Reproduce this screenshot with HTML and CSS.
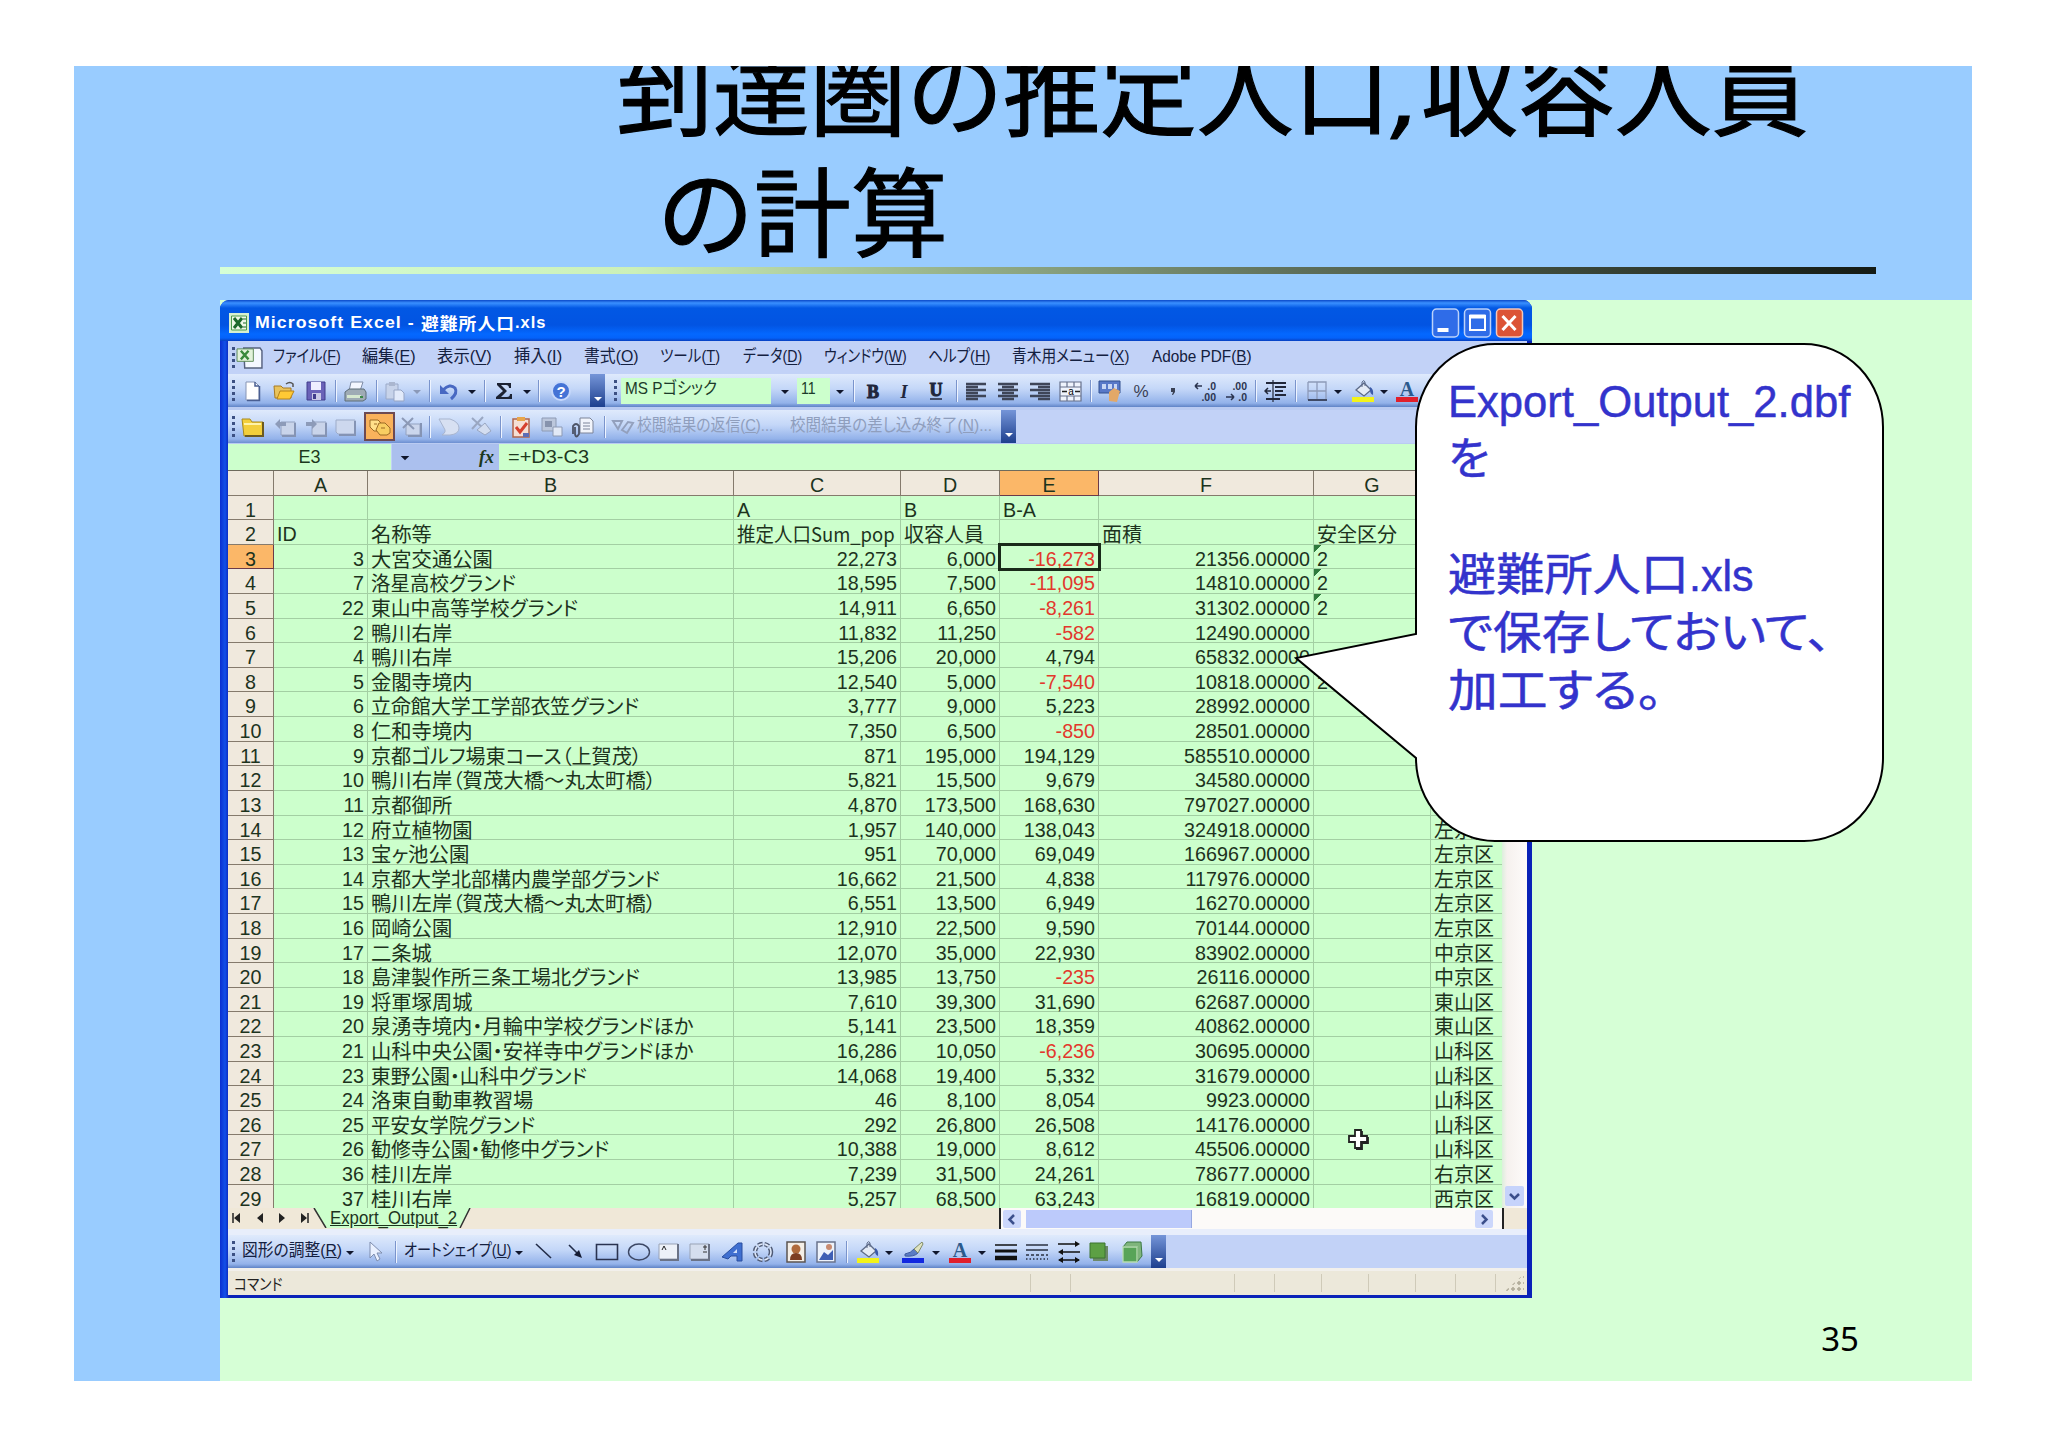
FILE: index.html
```html
<!DOCTYPE html>
<html lang="ja">
<head>
  <meta charset="UTF-8">
  <title>到達圏の推定人口,収容人員の計算</title>
  <link rel="stylesheet" href="styles.css">
</head>
<body>

<!-- toolbar icons -->
<svg class="symbols">
  <symbol id="new" viewBox="0 0 24 24"><path d="M6 3h9l4 4v14H6z" fill="#fff" stroke="#8795b5"/><path d="M15 3v4h4M19.500 7v14.500H7" fill="none" stroke="#4a5f92" stroke-width="1.500"/></symbol>
  <symbol id="open" viewBox="0 0 24 24"><path d="M2 7h7l2 2h8v10H3z" fill="#e9c35c" stroke="#a87a22"/><path d="M5 20l3-8h14l-4 8z" fill="#ffc935" stroke="#b5821d"/><path d="M14 5q4-3 7 0v3" fill="none" stroke="#555" stroke-width="1.500"/></symbol>
  <symbol id="save" viewBox="0 0 24 24"><path d="M3 3h18v18H3z" fill="#6a62b8" stroke="#413c8c"/><path d="M7 3h10v8H7z" fill="#eef"/><path d="M8 14h9v7H8z" fill="#c9c9e6"/><path d="M9 15h3v5H9z" fill="#413c8c"/></symbol>
  <symbol id="print" viewBox="0 0 24 24"><path d="M8 3h12l-3 9H6z" fill="#f4f7ff" stroke="#7d8ba5"/><path d="M2 13l4-3h15l2 3v7l-3 2H2z" fill="#9fabb5" stroke="#5c6c76"/><path d="M4 16h14v3H4z" fill="#d6e8d0"/><path d="M17 17h3v2h-3z" fill="#3c8a4a"/></symbol>
  <symbol id="paste" viewBox="0 0 24 24"><path d="M3 5h12v15H3z" fill="#c7d3ea" stroke="#9aa9c8"/><path d="M6 3h6v4H6z" fill="#aab6cf"/><path d="M11 11h7l3 3v8H11z" fill="#e2eafa" stroke="#97a5c4"/></symbol>
  <symbol id="undo" viewBox="0 0 24 24"><path d="M6 11q7-7 12-2q3 5-4 11" fill="none" stroke="#4868c2" stroke-width="3"/><path d="M3 6v9h9z" fill="#4868c2"/></symbol>
  <symbol id="sum" viewBox="0 0 24 24"><path d="M5 4h14v5h-2q0-3-3-3H9l6 6-6 6h6q3 0 3-3h2v5H4v-2l7-6-6-6z" fill="#1c2233"/></symbol>
  <symbol id="help" viewBox="0 0 24 24"><circle cx="12" cy="12" r="9" fill="#4473d6" stroke="#c6d8fb" stroke-width="2"/><text x="12" y="18" text-anchor="middle" class="help-mark">?</text></symbol>
  <symbol id="arr" viewBox="0 0 24 24"><path d="M8 11h8l-4 4z" fill="#10162c"/></symbol>
  <symbol id="arrg" viewBox="0 0 24 24"><path d="M8 11h8l-4 4z" fill="#8b99b8"/></symbol>
  <symbol id="bold" viewBox="0 0 24 24"><text x="12" y="18.500" text-anchor="middle" class="fmt-b">B</text></symbol>
  <symbol id="italic" viewBox="0 0 24 24"><text x="12" y="18.500" text-anchor="middle" class="fmt-i">I</text></symbol>
  <symbol id="under" viewBox="0 0 24 24"><text x="12" y="17" text-anchor="middle" class="fmt-b">U</text><path d="M6 20h12" stroke="#20263c" stroke-width="1.500"/></symbol>
  <symbol id="left" viewBox="0 0 24 24"><path d="M2 5h20M2 8h12M2 11h20M2 14h12M2 17h20M2 20h12" stroke="#3e4558" stroke-width="2.400"/></symbol>
  <symbol id="center" viewBox="0 0 24 24"><path d="M2 5h20M6 8h12M2 11h20M6 14h12M2 17h20M6 20h12" stroke="#3e4558" stroke-width="2.400"/></symbol>
  <symbol id="right" viewBox="0 0 24 24"><path d="M2 5h20M10 8h12M2 11h20M10 14h12M2 17h20M10 20h12" stroke="#3e4558" stroke-width="2.400"/></symbol>
  <symbol id="merge" viewBox="0 0 24 24"><path d="M1 3h21v19H1zM1 8h21M1 17h21M8 3v5M15 3v5M8 17v5M15 17v5" fill="#eef3fc" stroke="#66708a" stroke-width="1.200"/><path d="M3 12.500h5M21 12.500h-5" stroke="#222" stroke-width="1.500"/><text x="12" y="16" text-anchor="middle" class="tiny">a</text></symbol>
  <symbol id="money" viewBox="0 0 24 24"><path d="M1 2h21v12H1z" fill="#5878c8" stroke="#33508f"/><path d="M4 5h4v5H4zM10 5h4v5h-4zM16 5h3v5h-3z" fill="#c8d6f4"/><path d="M11 13l5-4 6 3-3 11-8-1z" fill="#e3a868"/></symbol>
  <symbol id="percent" viewBox="0 0 24 24"><text x="12" y="18" text-anchor="middle" class="sym">%</text></symbol>
  <symbol id="comma" viewBox="0 0 24 24"><path d="M10 9h4v4l-2 3h-1l1-3h-2z" fill="#3a4154"/></symbol>
  <symbol id="inc" viewBox="0 0 24 24"><path d="M2 7h7M2 7l3-3M2 7l3 3" stroke="#2b3550" fill="none" stroke-width="1.500"/><text x="23" y="11" text-anchor="end" class="dec">.0</text><text x="23" y="22" text-anchor="end" class="dec">.00</text></symbol>
  <symbol id="dec" viewBox="0 0 24 24"><path d="M1 18h8M9 18l-3-3M9 18l-3 3" stroke="#2b3550" fill="none" stroke-width="1.500"/><text x="22" y="11" text-anchor="end" class="dec">.00</text><text x="22" y="22" text-anchor="end" class="dec">.0</text></symbol>
  <symbol id="indent" viewBox="0 0 24 24"><path d="M2 4h20M11 8h11M11 12h8M11 16h11M2 20h14" stroke="#22283a" stroke-width="2.200"/><path d="M9 1v22" stroke="#22283a" stroke-width="1.200"/><path d="M1 12h6M4 9l-3 3 3 3" fill="none" stroke="#22283a" stroke-width="1.500"/></symbol>
  <symbol id="border" viewBox="0 0 24 24"><path d="M3 3h18v18M3 3v18M12 3v18M3 12h18" fill="none" stroke="#8d9ab8" stroke-width="1.300"/><path d="M3 21h19" stroke="#3f4a66" stroke-width="2"/></symbol>
  <symbol id="fill" viewBox="0 0 24 24"><path d="M5 11l8-7 7 7-7 6z" fill="#e4ebf6" stroke="#5d6b88" stroke-width="1.300"/><path d="M11 8V3q2-3 3 0v4" fill="none" stroke="#5d6b88"/><path d="M19 8q4 2 3 8q-3-1-3-5z" fill="#3b5aa8"/><path d="M1 18h22v5H1z" fill="#f3f31a"/></symbol>
  <symbol id="pen" viewBox="0 0 24 24"><path d="M4 14q6-1 9-5l4 4q-4 4-13 3z" fill="#5b7cc4" stroke="#3f5c9e"/><path d="M13 9l8-7 1 2-5 9z" fill="#dfe3c0" stroke="#7f8a66"/><path d="M1 18h22v5H1z" fill="#1228e0"/></symbol>
  <symbol id="fontc" viewBox="0 0 24 24"><text x="12" y="16.500" text-anchor="middle" class="font-a">A</text><path d="M1 18h22v5H1z" fill="#e01f2b"/></symbol>
  <symbol id="folder" viewBox="0 0 24 24"><path d="M1 4h8l2 3h11v14H3z" fill="#f3cf3c" stroke="#a8891c"/><path d="M22 7v14H4" fill="none" stroke="#6c5a20" stroke-width="2"/><path d="M3 9h17" stroke="#fff3a8" stroke-width="2"/></symbol>
  <symbol id="gback" viewBox="0 0 24 24"><path d="M8 7h14v13H8z" fill="#c9d4ea" stroke="#94a2c0"/><path d="M22 8v13H9" fill="none" stroke="#8594b4" stroke-width="2"/><path d="M2 9l5-5v3h6v4H7v3z" fill="#8d9bb9"/></symbol>
  <symbol id="gfwd" viewBox="0 0 24 24"><path d="M8 7h14v13H8z" fill="#c9d4ea" stroke="#94a2c0"/><path d="M22 8v13H9" fill="none" stroke="#8594b4" stroke-width="2"/><path d="M13 9L8 4v3H2v4h6v3z" fill="#8d9bb9"/></symbol>
  <symbol id="gnote" viewBox="0 0 24 24"><path d="M2 5h19v14H4l-2-2z" fill="#cdd8ee" stroke="#9dabc8"/><path d="M21 6v14H5" fill="none" stroke="#8594b4" stroke-width="2"/></symbol>
  <symbol id="notes" viewBox="0 0 24 24"><path d="M2 5h8l4 4v7H6l-4-4z" fill="#ffe08a" stroke="#9c6a25"/><path d="M11 8h6l5 5v5l-3 2h-7l-4-5z" fill="#f8cd62" stroke="#9c6a25"/><path d="M6 9h3M13 13h4" stroke="#9c6a25"/></symbol>
  <symbol id="gdel" viewBox="0 0 24 24"><path d="M7 9h14v11H7z" fill="#cbd6ec" stroke="#94a2c0"/><path d="M22 8v13H9" fill="none" stroke="#8594b4" stroke-width="2"/><path d="M3 3l12 11M14 3L4 13" stroke="#8c99b6" stroke-width="2"/></symbol>
  <symbol id="gpage" viewBox="0 0 24 24"><path d="M2 4h11q9 3 9 9t-9 7H5q5-3 2-7z" fill="#d7e0f2" stroke="#a8b5cf"/></symbol>
  <symbol id="gdel2" viewBox="0 0 24 24"><path d="M3 3l13 12M14 2L3 14" stroke="#9aa7c2" stroke-width="2"/><path d="M8 15l8-7 6 8-6 4z" fill="#d3ddf0" stroke="#9aa7c2"/></symbol>
  <symbol id="task" viewBox="0 0 24 24"><path d="M4 4h16v18H4z" fill="#f5dfd5" stroke="#b0664c" stroke-width="1.500"/><path d="M8 2h8v4H8z" fill="#e8a64c"/><path d="M7 12l4 5 7-9" fill="none" stroke="#d6402e" stroke-width="3"/><path d="M14 18h6v4h-6z" fill="#5d6db5"/></symbol>
  <symbol id="gimg" viewBox="0 0 24 24"><path d="M1 3h14v13H1z" fill="#bcc7dc" stroke="#8d9ab4"/><path d="M4 6h7v6H4z" fill="#8793ad"/><path d="M12 12h9v9h-9z" fill="#e2e9f6" stroke="#8d9ab4"/></symbol>
  <symbol id="clip" viewBox="0 0 24 24"><path d="M9 3h10l3 3v12H9z" fill="#f1f4fb" stroke="#7c8498"/><path d="M12 8h7M12 11h7M12 14h7" stroke="#7c8498"/><path d="M2 19V11q3-4 6 0v8q-3 5-4 0v-7" fill="none" stroke="#4c5366" stroke-width="1.800"/></symbol>
  <symbol id="greply" viewBox="0 0 24 24"><path d="M2 6l9 0-4 8zM11 15l6-8 5 1-6 10z" fill="none" stroke="#93a0bd" stroke-width="2"/></symbol>
  <symbol id="pointer" viewBox="0 0 24 24"><path d="M7 2v16l4-4 3 7 3-2-3-6h5z" fill="#eaf1ff" stroke="#7e8dae"/></symbol>
  <symbol id="line" viewBox="0 0 24 24"><path d="M4 4l15 14" stroke="#222c48" stroke-width="1.600"/></symbol>
  <symbol id="arrow" viewBox="0 0 24 24"><path d="M6 5l9 9" stroke="#222c48" stroke-width="1.600"/><path d="M19 18l-8-3 5-5z" fill="#141b34"/></symbol>
  <symbol id="rect" viewBox="0 0 24 24"><path d="M1.500 4.500h21v15h-21z" fill="none" stroke="#2a3350" stroke-width="1.600"/></symbol>
  <symbol id="oval" viewBox="0 0 24 24"><ellipse cx="12" cy="12" rx="10.500" ry="8" fill="none" stroke="#3c4764" stroke-width="1.400"/></symbol>
  <symbol id="tbox" viewBox="0 0 24 24"><path d="M2 4h19v15H2z" fill="#edf1f8" stroke="#9aa3b5"/><path d="M21 4v16H3" fill="none" stroke="#6b7386" stroke-width="2"/><path d="M5 10l2-4 2 4" fill="none" stroke="#222"/></symbol>
  <symbol id="vbox" viewBox="0 0 24 24"><path d="M2 4h19v15H2z" fill="#d5deee" stroke="#9aa3b5"/><path d="M21 4v16H3" fill="none" stroke="#6b7386" stroke-width="2"/><path d="M15 7h4M17 5v5M15 12h4" stroke="#333"/></symbol>
  <symbol id="wordart" viewBox="0 0 24 24"><path d="M1 17L17 3h4v18h-5v-5h-6l-3 3z" fill="#3f6fd0" stroke="#2a4f9f"/><path d="M12 13h4V9z" fill="#cfe0fb"/></symbol>
  <symbol id="cycle" viewBox="0 0 24 24"><circle cx="12" cy="12" r="8" fill="none" stroke="#4f5b76" stroke-width="4.500" stroke-dasharray="4.500 2"/><circle cx="12" cy="12" r="8" fill="none" stroke="#dfe8f8" stroke-width="1.600" stroke-dasharray="4.500 2"/></symbol>
  <symbol id="clipart" viewBox="0 0 24 24"><path d="M3 2h18v20H3z" fill="#f4eee6" stroke="#5b5450" stroke-width="1.500"/><circle cx="12" cy="9" r="4.500" fill="#b06a3c"/><path d="M6 20q0-7 6-7t6 7z" fill="#7c3c22"/></symbol>
  <symbol id="picture" viewBox="0 0 24 24"><path d="M3 2h18v20H3z" fill="#eef3fb" stroke="#6a738c" stroke-width="1.500"/><path d="M5 20l5-8 4 3 5-5v10z" fill="#3f5fb4"/><circle cx="15" cy="7" r="3" fill="#c98b70"/></symbol>
  <symbol id="weight" viewBox="0 0 24 24"><path d="M1 5h22" stroke="#111" stroke-width="1.500"/><path d="M1 11h22" stroke="#111" stroke-width="3"/><path d="M1 18h22" stroke="#111" stroke-width="4.500"/></symbol>
  <symbol id="dash" viewBox="0 0 24 24"><path d="M1 5h22M1 10h22" stroke="#2a3040" stroke-width="1.500"/><path d="M1 15h22" stroke="#2a3040" stroke-width="1.500" stroke-dasharray="3 2"/><path d="M1 19h22" stroke="#2a3040" stroke-width="1.500" stroke-dasharray="1.500 2"/></symbol>
  <symbol id="arrows" viewBox="0 0 24 24"><path d="M1 4h20M3 12h20M2 20h20" stroke="#111" stroke-width="1.500"/><path d="M18 1l5 3-5 3zM6 9l-5 3 5 3zM6 17l-5 3 5 3zM18 17l5 3-5 3z" fill="#111"/></symbol>
  <symbol id="shadow" viewBox="0 0 24 24"><path d="M6 6h15v15H6z" fill="#6d8a6a"/><path d="M3 3h15v15H3z" fill="#5da044" stroke="#3d7530"/></symbol>
  <symbol id="threed" viewBox="0 0 24 24"><path d="M7 2h14l1 14-5 6V7H3z" fill="#7fb57c" stroke="#3d7a45"/><path d="M3 7h14v15H3z" fill="#58a458" stroke="#b7dcb0" stroke-width="1.300"/></symbol>
</svg>

<div class="slide">
  <header class="slide-head">
    <h1><span class="line1">到達圏の推定人口<span class="c">,</span>収容人員</span><span class="line2">の計算</span></h1>
    <div class="rule"></div>
  </header>

  <div class="slide-body">
    <div class="window">
      <div class="titlebar">
        <svg class="xl" viewBox="0 0 20 20"><path d="M0 0h20v20H0z" fill="#d6f0cf"/><path d="M2.500 3h15v14h-15z" fill="#eef8e8" stroke="#4d9a4c"/><path d="M5 5l8 10M13 5L5 15" stroke="#1d6a2c" stroke-width="3"/><path d="M14 6h3M14 10h3M14 14h3" stroke="#1d6a2c"/></svg>
        <span data-w="166">Microsoft Excel - </span><span data-w="94">避難所人口</span><span data-w="31">.xls</span>
        <div class="win-btns">
          <svg viewBox="0 0 28 30"><rect x="1" y="1" width="26" height="28" rx="4" fill="#2f6ce8" stroke="#bcd2fa" stroke-width="1.500"/><path d="M6 20h11v4H6z" fill="#fff"/></svg>
          <svg viewBox="0 0 28 30"><rect x="1" y="1" width="26" height="28" rx="4" fill="#2f6ce8" stroke="#bcd2fa" stroke-width="1.500"/><path d="M6.500 8h15v14h-15z" fill="none" stroke="#fff" stroke-width="2"/><path d="M6 8.500h16" stroke="#fff" stroke-width="4"/></svg>
          <svg viewBox="0 0 28 30"><rect x="1" y="1" width="26" height="28" rx="4" fill="#dc5436" stroke="#f3c7bb" stroke-width="1.500"/><path d="M7 8l13 14M20 8L7 22" stroke="#fff" stroke-width="3"/></svg>
        </div>
      </div>

      <div class="menubar">
        <i class="grip"></i>
        <svg class="doc" viewBox="0 0 28 24"><path d="M8 2h17l2 3v18H9z" fill="#f4f8ff" stroke="#56617e" stroke-width="1.500"/><path d="M1 3h17v13H1z" fill="#e2f2da" stroke="#5c8a58"/><path d="M5 5l8 9M13 5l-8 9" stroke="#3a8a3c" stroke-width="2.500"/></svg>
        <div class="menus" id="menus"></div>
      </div>

      <div class="bar" id="standard"></div>
      <div class="bar review" id="review"></div>

      <div class="formula">
        <div class="name-box">E3</div>
        <div class="fx-area"><svg viewBox="0 0 24 24"><use href="#arr"/></svg><em>fx</em></div>
        <div class="fx-text"><span data-w="81">=+D3-C3</span></div>
      </div>

      <div class="sheet-area">
        <div class="sheet" id="sheet"></div>
        <div class="vscroll"><svg viewBox="0 0 19 20"><rect width="19" height="20" rx="2" fill="#c6d3fb"/><path d="M5 8l4.500 4.500L14 8" fill="none" stroke="#3c4f8c" stroke-width="2.500"/></svg></div>
      </div>

      <div class="tabs">
        <svg class="tab-nav" viewBox="0 0 84 20"><path d="M5 5v10M80 5v10" stroke="#222" stroke-width="1.500"/><path d="M12 5v10l-6-5zM35 5v10l-6-5zM51 5v10l6-5zM73 5v10l6-5z" fill="#222"/></svg>
        <div class="tab"><svg viewBox="0 0 160 20"><path d="M2 0l12 20h134l10-20z" fill="#ccffcc"/><path d="M2 0l12 20M148 20l10-20" fill="none" stroke="#333" stroke-width="1.500"/></svg><span data-w="127">Export_Output_2</span></div>
        <div class="hscroll">
          <svg viewBox="0 0 18 18"><rect width="18" height="18" rx="2" fill="#ccd7fb"/><path d="M11 5L6.500 9.500 11 14" fill="none" stroke="#3c4f8c" stroke-width="2.500"/></svg>
          <div class="thumb"></div>
          <svg class="sr" viewBox="0 0 18 18"><rect width="18" height="18" rx="2" fill="#ccd7fb"/><path d="M7 5l4.500 4.500L7 14" fill="none" stroke="#3c4f8c" stroke-width="2.500"/></svg>
        </div>
        <div class="corner"></div>
      </div>

      <div class="bar draw" id="draw"></div>
      <div class="status"><span data-w="48">コマンド</span><div class="panes"><i></i><i></i><i></i><i></i><i></i><i></i><i></i><i></i><i></i><b></b></div></div>
    </div>
  </div>

  <svg class="mouse" viewBox="0 0 22 22"><path d="M8 2h6v6h6v6h-6v6H8v-6H2V8h6z" fill="#fff" stroke="#222" stroke-width="1.800"/><path d="M15 3v5M21 9v6h-6v6H9" fill="none" stroke="#222" stroke-width="1.800"/></svg>

  <div class="callout">
    <svg viewBox="0 0 592 500"><path d="M201 2H510A79 83 0 0 1 589 85V416A79 83 0 0 1 510 499H201A79 83 0 0 1 122 416L2 316L122 292V85A79 83 0 0 1 201 2Z" fill="#fff" stroke="#000" stroke-width="2"/></svg>
    <div class="callout-text">
      <p><span data-w="402">Export_Output_2.dbf</span></p>
      <p>を</p>
      <p>&nbsp;</p>
      <p><span data-w="241">避難所人口</span><span data-w="65">.xls</span></p>
      <p><span data-w="383">で保存しておいて、</span></p>
      <p><span data-w="215">加工する。</span></p>
    </div>
  </div>
  <div class="page-no">35</div>
</div>

<script>
// menu captions: text, accelerator, left edge, width (window coordinates)
const menus = [
  ["ファイル", "F", 45, 68], ["編集", "E", 134, 54], ["表示", "V", 210, 55], ["挿入", "I", 287, 48],
  ["書式", "O", 357, 55], ["ツール", "T", 433, 60], ["データ", "D", 516, 59], ["ウィンドウ", "W", 597, 83],
  ["ヘルプ", "H", 701, 62], ["青木用メニュー", "X", 785, 117], ["Adobe PDF", "B", 925, 100]
];

// toolbar items: [name, centre x] or [kind, left, width, html]
const standard = [
  ["grip", 5], ["new", 24], ["open", 56], ["save", 88], ["sep", 108], ["print", 127], ["sep", 149], ["paste", 167],
  ["arrg", 189], ["sep", 202], ["undo", 221], ["arr", 244], ["sep", 257], ["sum", 276], ["arr", 299], ["sep", 311],
  ["help", 333], ["cap", 369], ["grip", 387], ["combo", 393, 150, '<span data-w="92">MS Pゴシック</span>'], ["arr", 557],
  ["combo", 569, 33, '<span data-w="15">11</span>'], ["arr", 612], ["sep", 626], ["bold", 645], ["italic", 676],
  ["under", 708], ["sep", 729], ["left", 748], ["center", 780], ["right", 812], ["merge", 843], ["sep", 863],
  ["money", 882], ["percent", 913], ["comma", 945], ["inc", 977], ["dec", 1009], ["sep", 1028], ["indent", 1048],
  ["sep", 1068], ["border", 1089], ["arr", 1110], ["fill", 1135], ["arr", 1156], ["fontc", 1179]
];
const review = [
  ["grip", 5], ["folder", 25], ["gback", 57], ["gfwd", 88], ["gnote", 118], ["hot", 151], ["gdel", 183], ["sep", 202],
  ["gpage", 221], ["gdel2", 253], ["sep", 273], ["task", 293], ["gimg", 325], ["clip", 355], ["sep", 377],
  ["greply", 395], ["label", 409, 136, '<span class="dim" data-w="136">校閲結果の返信(<u>C</u>)...</span>'],
  ["label", 562, 202, '<span class="dim" data-w="202">校閲結果の差し込み終了(<u>N</u>)...</span>'], ["cap", 780]
];
const draw = [
  ["grip", 5], ["label", 14, 100, '<span data-w="100">図形の調整(<u>R</u>)</span>'], ["arr", 122], ["pointer", 147],
  ["sep", 168], ["label", 176, 107, '<span data-w="107">オートシェイプ(<u>U</u>)</span>'], ["arr", 291], ["line", 316],
  ["arrow", 347], ["rect", 379], ["oval", 411], ["tbox", 441], ["vbox", 472], ["wordart", 505], ["cycle", 535],
  ["clipart", 568], ["picture", 598], ["sep", 619], ["fill", 640], ["arr", 661], ["pen", 685], ["arr", 708],
  ["fontc", 732], ["arr", 754], ["weight", 778], ["dash", 809], ["arrows", 841], ["shadow", 871], ["threed", 904], ["cap", 930]
];

const sizes = { grip: 3, sep: 2, cap: 15, hot: 31 };

function renderBar(id, items) {
  let x = 0;
  let html = "";
  items.forEach(([kind, pos, width, inner]) => {
    const w = width || sizes[kind] || 24;
    const left = width ? pos : pos - w / 2;
    const style = `style="margin-left:${left - x}px${width ? ";width:" + w + "px" : ""}"`;
    if (kind === "combo" || kind === "label") html += `<div class="${kind}" ${style}>${inner}</div>`;
    else if (kind === "hot") html += `<div class="hot" ${style}><svg><use href="#notes"/></svg></div>`;
    else if (sizes[kind]) html += `<i class="${kind}" ${style}></i>`;
    else html += `<svg ${style}><use href="#${kind}"/></svg>`;
    x = left + w;
  });
  document.getElementById(id).innerHTML = html + (id === "standard" ? "" : '<div class="rest"></div>');
}

let menuX = 35;
document.getElementById("menus").innerHTML = menus.map(([text, key, left, w]) => {
  const gap = left - menuX;
  menuX = left + w;
  return `<div style="margin-left:${gap}px"><span data-w="${w}">${text}(<u>${key}</u>)</span></div>`;
}).join("");

// ID, name, population, capacity, difference, area, safety, ward, name width
const rows = [
  ["", "", "A", "B", "B-A", "", "", ""],
  ["ID", "名称等", "推定人口Sum_pop", "収容人員", "", "面積", "安全区分", ""],
  [3, "大宮交通公園", "22,273", "6,000", "-16,273", "21356", "2", ""],
  [7, "洛星高校グランド", "18,595", "7,500", "-11,095", "14810", "2", "", 145],
  [22, "東山中高等学校グランド", "14,911", "6,650", "-8,261", "31302", "2", "", 207],
  [2, "鴨川右岸", "11,832", "11,250", "-582", "12490", "", ""],
  [4, "鴨川右岸", "15,206", "20,000", "4,794", "65832", "", ""],
  [5, "金閣寺境内", "12,540", "5,000", "-7,540", "10818", "2", ""],
  [6, "立命館大学工学部衣笠グランド", "3,777", "9,000", "5,223", "28992", "", "", 268],
  [8, "仁和寺境内", "7,350", "6,500", "-850", "28501", "", ""],
  [9, "京都ゴルフ場東コース（上賀茂）", "871", "195,000", "194,129", "585510", "", "", 271],
  [10, "鴨川右岸（賀茂大橋～丸太町橋）", "5,821", "15,500", "9,679", "34580", "", "", 285],
  [11, "京都御所", "4,870", "173,500", "168,630", "797027", "", ""],
  [12, "府立植物園", "1,957", "140,000", "138,043", "324918", "", "左京区"],
  [13, "宝ヶ池公園", "951", "70,000", "69,049", "166967", "", "左京区", 98],
  [14, "京都大学北部構内農学部グランド", "16,662", "21,500", "4,838", "117976", "", "左京区", 289],
  [15, "鴨川左岸（賀茂大橋～丸太町橋）", "6,551", "13,500", "6,949", "16270", "", "左京区", 285],
  [16, "岡崎公園", "12,910", "22,500", "9,590", "70144", "", "左京区"],
  [17, "二条城", "12,070", "35,000", "22,930", "83902", "", "中京区"],
  [18, "島津製作所三条工場北グランド", "13,985", "13,750", "-235", "26116", "", "中京区", 269],
  [19, "将軍塚周城", "7,610", "39,300", "31,690", "62687", "", "東山区"],
  [20, "泉湧寺境内・月輪中学校グランドほか", "5,141", "23,500", "18,359", "40862", "", "東山区", 322],
  [21, "山科中央公園・安祥寺中グランドほか", "16,286", "10,050", "-6,236", "30695", "", "山科区", 322],
  [23, "東野公園・山科中グランド", "14,068", "19,400", "5,332", "31679", "", "山科区", 216],
  [24, "洛東自動車教習場", "46", "8,100", "8,054", "9923", "", "山科区"],
  [25, "平安女学院グランド", "292", "26,800", "26,508", "14176", "", "山科区", 164],
  [26, "勧修寺公園・勧修中グランド", "10,388", "19,000", "8,612", "45506", "", "山科区", 238],
  [36, "桂川左岸", "7,239", "31,500", "24,261", "78677", "", "右京区"],
  [37, "桂川右岸", "5,257", "68,500", "63,243", "16819", "", "西京区"]
];

let html = '<div class="row head">' + ["", "A", "B", "C", "D", "E", "F", "G", "H"]
  .map((c, i) => `<div class="w${i}${c === "E" ? " on" : ""}">${c}</div>`).join("") + "</div>";

rows.forEach((r, n) => {
  const data = n > 1;
  html += `<div class="row"><div class="no w0${n === 2 ? " on" : ""}">${n + 1}</div>`;
  for (let c = 0; c < 8; c++) {
    let text = String(r[c]);
    let cls = "w" + (c + 1);
    if (data && c !== 1 && c < 6) cls += " num";
    if (/[^\x00-\x7f]/.test(text)) cls += " jp";
    if (data && c === 4 && text[0] === "-") cls += " neg";
    if (n === 2 && c === 4) cls += " sel";
    if (c === 6 && text === "2") cls += " flag";
    if (data && c === 5) text += ".00000";
    if (c === 1 && text) text = `<span data-w="${r[8] || text.length * 20.3}">${text}</span>`;
    if (n === 1 && c === 2) text = `<span data-w="158">${text}</span>`;
    html += `<div class="${cls}">${text}</div>`;
  }
  html += "</div>";
});
document.getElementById("sheet").innerHTML = html;

renderBar("standard", standard);
renderBar("review", review);
renderBar("draw", draw);

// condense or widen captions to the width of the original UI font
document.querySelectorAll("[data-w]").forEach(el => {
  const w = parseFloat(el.dataset.w);
  const natural = el.offsetWidth;
  el.style.transform = `scaleX(${w / natural})`;
  el.style.marginRight = (w - natural) + "px";
});
</script>
</body>
</html>
```
FILE: styles.css
```css
body { margin: 0; background: #fff; font-family: "Liberation Sans", "Noto Sans CJK JP", sans-serif; overflow: hidden; }
p, h1 { margin: 0; font-weight: normal; }
.symbols { display: none; }

.slide { position: relative; width: 1898px; height: 1315px; margin: 66px 0 0 74px; overflow: hidden; background: #d6ffd6; }
.slide-head { height: 234px; background: #9cf; overflow: hidden; }
.slide-head h1 { display: flow-root; height: 201px; font: 97px/121px "Noto Sans CJK JP", sans-serif; color: #000; -webkit-text-stroke: 1.2px #000; }
.slide-head h1 span { white-space: nowrap; }
.line1, .line2 { display: block; margin-left: 542px; }
.line1 { margin-top: -41px; letter-spacing: -0.2px; }
.line2 { margin-left: 583px; }
.line1 .c { font-family: "DejaVu Sans", sans-serif; font-style: italic; line-height: 1; }
.rule { width: 1656px; height: 7px; margin-left: 146px; background: linear-gradient(to right, #d6ffd6, #ccf0b8 25%, #5e6f5a 65%, #141a14); }
.slide-body { height: 1081px; padding-left: 146px; background: linear-gradient(to right, #9cf 146px, #d6ffd6 146px); }

/* excel window */
.window { box-sizing: border-box; width: 1312px; height: 998px; padding: 0 5px 5px 8px; display: flex; flex-direction: column; background: linear-gradient(to right, #0a2fd0 0, #1250e8 5px, #0a22b8 9px, #0a22b8 100%); border-radius: 9px 9px 0 0; overflow: hidden; }
.titlebar { box-sizing: border-box; height: 41px; margin: 0 -5px 0 -8px; padding: 4px 8px 0 9px; display: flex; align-items: center; flex: none; background: linear-gradient(#0a48c8, #3a90ff 3px, #0258e4 8px, #0254e2 25px, #0468ff 34px, #0462fa 38px, #0840c0); color: #fff; font: bold 17px "Liberation Sans", "Noto Sans CJK JP", sans-serif; letter-spacing: 1px; white-space: pre; }
.xl { width: 20px; height: 20px; margin-right: 6px; }
.win-btns { margin-left: auto; display: flex; gap: 3px; }
.win-btns svg { width: 29px; height: 30px; }
[data-w] { display: inline-block; white-space: pre; transform-origin: 0 50%; flex: none; }

.menubar { height: 33px; flex: none; display: flex; align-items: center; background: #c2d2f7; padding-left: 4px; }
.doc { width: 27px; height: 23px; margin-left: 1px; }
.menus { display: flex; }
.menus, .bar { font-size: 17px; color: #142040; font-feature-settings: "palt"; line-height: 1.3; }
.menus u { text-underline-offset: 2px; }
.grip { display: block; flex: none; width: 3px; height: 21px; background: repeating-linear-gradient(#3c5083 0 3px, transparent 3px 6px); }

.bar { height: 33px; margin-bottom: 3px; flex: none; display: flex; align-items: center; background: linear-gradient(#dfeafc, #c4d7f8 45%, #93b2ea 88%, #5f83c6); box-shadow: 0 3px #bacbf2; }
.bar svg { flex: none; width: 24px; height: 24px; }
.bar .sep { flex: none; box-sizing: border-box; width: 2px; height: 22px; background: #7a94cc; border-right: 1px solid #eef4ff; }
.bar .cap { flex: none; box-sizing: border-box; width: 15px; height: 33px; padding-top: 23px; background: linear-gradient(#7595d8, #1d3f8e); }
.bar .cap::before { content: ""; display: block; margin-left: 4px; width: 0; border: 4px solid transparent; border-top-color: #fff; border-bottom: 0; }
.bar .combo { flex: none; box-sizing: border-box; height: 26px; padding-left: 4px; background: #ccffcc; color: #1b3a2a; white-space: nowrap; }
.bar .label { flex: none; white-space: nowrap; }
.bar .hot { flex: none; box-sizing: border-box; width: 31px; height: 29px; padding: 1px 2px; border: 2px solid #6d4a52; background: #f9b25c; }
.bar .dim { color: #8f9ebd; }
.review { margin-bottom: 1px; background: linear-gradient(#dfeafc, #c4d7f8 45%, #93b2ea 88%, #6d8fd0); }
.bar .rest { flex: 1; align-self: stretch; background: #c2d2f7; }
.help-mark { font: bold 15px "Liberation Sans"; fill: #fff; }
.fmt-b { font: bold 18px "Liberation Serif"; fill: #20263c; stroke: #20263c; }
.fmt-i { font: italic bold 18px "Liberation Serif"; fill: #20263c; }
.tiny { font: 10px "Liberation Sans"; }
.sym { font: 17px "Liberation Sans"; fill: #3a4154; }
.dec { font: bold 10.5px "Liberation Sans"; fill: #2b3550; }
.font-a { font: bold 20px "Liberation Serif"; fill: #2c5a8c; }

.formula { height: 26px; flex: none; display: flex; font-size: 18px; line-height: 27px; color: #1c381c; }
.name-box { width: 163px; background: #ccffcc; text-align: center; border-right: 1px solid #c2d2f7; }
.fx-area { width: 107px; background: #abc0ee; display: flex; align-items: center; justify-content: space-between; }
.fx-area svg { width: 26px; height: 26px; }
.fx-area em { margin-right: 5px; font: italic bold 18px "Liberation Serif", serif; }
.fx-text { flex: 1; background: #ccffcc; padding-left: 9px; }

/* grid */
.sheet-area { height: 738px; flex: none; display: flex; background: #ccffcc; overflow: hidden; }
.sheet { width: 1274px; flex: none; border-top: 1px solid #6e6a5c; color: #1d331d; font-size: 19.7px; }
.row { display: flex; height: 24.61px; }
.row > div { box-sizing: border-box; flex: none; border-right: 1px solid #a3cfa3; border-bottom: 1px solid #a3cfa3; padding: 2px 3px 0; line-height: 24px; white-space: nowrap; }
.row .no, .head > div { background: #f0e9dd; border-color: #857a6c; text-align: center; }
.row .on { background: #fbb768; border-color: #6b3a4a; }
.row .num { text-align: right; }
.row .jp { font-family: "Noto Sans CJK JP", sans-serif; font-feature-settings: "palt"; font-size: 20px; }
.row .neg { color: #e2382c; }
.row .sel { outline: 3px solid #1a2a1a; outline-offset: -1px; position: relative; border-color: transparent; }
.row .flag { background: linear-gradient(135deg, #2f7a3c 5px, transparent 5px) no-repeat; }
.w0 { width: 46px; } .w1 { width: 94px; } .w2 { width: 366px; } .w3 { width: 167px; } .w4 { width: 99px; }
.w5 { width: 99px; } .w6 { width: 215px; } .w7 { width: 117px; } .w8 { width: 71px; }
.row .w8 { border-right: 0; }
.vscroll { flex: 1; display: flex; align-items: flex-end; background: linear-gradient(to right, #dcefdc, #f6f1ee 5px, #fdfbfa); padding: 0 0 2px 3px; }
.vscroll svg { width: 19px; height: 20px; }

.tabs { height: 21px; flex: none; display: flex; background: #f0e8d8; border-bottom: 6px solid #e8eefb; }
.tab-nav { width: 84px; height: 20px; }
.tab { position: relative; width: 160px; height: 21px; font-size: 18px; line-height: 21px; color: #1d331d; }
.tab svg { position: absolute; left: 0; top: 0; width: 160px; height: 20px; }
.tab span { position: relative; margin-left: 18px; text-decoration: underline; }
.hscroll { margin-left: auto; width: 503px; display: flex; align-items: center; border-left: 2px solid #222; background: #fcfaf8; padding-left: 2px; box-sizing: border-box; }
.hscroll svg { width: 18px; height: 18px; }
.hscroll .sr { margin-left: auto; margin-right: 8px; width: 20px; }
.thumb { width: 166px; height: 18px; margin-left: 5px; background: #bccafb; border-right: 1px solid #96a8e0; box-sizing: border-box; }
.corner { width: 23px; border-left: 2px solid #222; }

.draw { margin-bottom: 3px; box-shadow: 0 3px #f2f0ec; }
.status { flex: 1; display: flex; align-items: center; background: #ece8da; padding-left: 6px; font-size: 16px; color: #222; font-feature-settings: "palt"; }
.panes { margin-left: auto; height: 18px; display: flex; padding-right: 3px; }
.panes i { box-sizing: border-box; width: 47px; border-left: 1px solid #cfcab8; }
.panes i:nth-child(1), .panes i:nth-child(3), .panes i:nth-child(7), .panes i:nth-child(8) { width: 40px; }
.panes i:nth-child(2) { width: 164px; }
.panes i:nth-child(9) { width: 9px; }
.panes b { width: 20px; background: radial-gradient(circle, #b3ae9c 1.5px, transparent 2px) 0 0 / 6px 6px; clip-path: polygon(100% 0, 100% 100%, 0 100%); }

/* things lying over the sheet */
.mouse { position: absolute; left: 1273px; top: 1062px; width: 22px; height: 22px; }
.callout { position: absolute; left: 1220px; top: 276px; width: 592px; height: 500px; }
.callout svg { position: absolute; left: 0; top: 0; width: 592px; height: 500px; }
.callout-text { position: relative; padding: 31px 0 0 154px; color: #3333cc; font: 45px/58px "Liberation Sans", "Noto Sans CJK JP", sans-serif; -webkit-text-stroke: 0.5px #3333cc; }
.callout-text p { height: 58px; white-space: nowrap; font-feature-settings: "palt"; }
.page-no { position: absolute; right: 113px; bottom: 20px; font: 33px/44px "Noto Sans", sans-serif; color: #000; }
```
